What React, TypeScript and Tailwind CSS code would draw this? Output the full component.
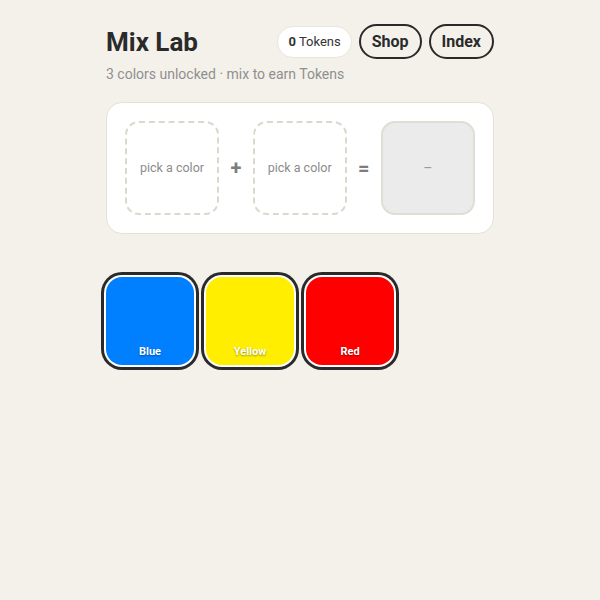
import React from "react"

const colors = [
  { name: "Blue", hex: "#0080ff" },
  { name: "Yellow", hex: "#ffee00" },
  { name: "Red", hex: "#ff0000" },
]

function Slot() {
  return (
    <div className="w-[94px] h-[94px] rounded-[14px] border-2 border-dashed border-[#ddd8cc] flex items-center justify-center text-[12.5px] text-[#8c8c8c]">
      pick a color
    </div>
  )
}

export default function App() {
  return (
    <div
      className="min-h-screen bg-[#f4f1eb] text-[#2a2a2a]"
      style={{ fontFamily: "Roboto, 'Liberation Sans', sans-serif" }}
    >
      <div className="max-w-[388px] mx-auto pt-[24px]">
        {/* Header */}
        <div className="flex items-center justify-between">
          <h1 className="text-[26px] font-bold leading-none">Mix Lab</h1>
          <div className="flex items-center gap-[7px]">
            <div className="h-[32px] px-[10px] rounded-full bg-white border border-[#ebe6dc] flex items-center text-[13px] text-[#333]">
              <span className="font-bold mr-[3px]">0</span>Tokens
            </div>
            <button className="h-[35px] px-[11px] rounded-full border-2 border-[#2a2a2a] text-[16px] font-bold">
              Shop
            </button>
            <button className="h-[35px] px-[11px] rounded-full border-2 border-[#2a2a2a] text-[16px] font-bold">
              Index
            </button>
          </div>
        </div>
        <p className="mt-[5px] text-[14px] text-[#8f8f8f]">3 colors unlocked · mix to earn Tokens</p>

        {/* Mixer */}
        <div className="mt-[17px] bg-white border border-[#e6e1d6] rounded-[16px] p-[18px] flex items-center justify-between">
          <Slot />
          <span className="text-[20px] font-bold text-[#7d7d7d]">+</span>
          <Slot />
          <span className="text-[20px] font-bold text-[#7d7d7d]">=</span>
          <div className="w-[94px] h-[94px] rounded-[14px] bg-[#ebebeb] border-2 border-[#e0ddd5] flex items-center justify-center text-[14px] text-[#9a9a9a]">
            –
          </div>
        </div>

        {/* Palette */}
        <div className="mt-[43px] grid grid-cols-4 gap-3">
          {colors.map((c) => (
            <button
              key={c.name}
              className="aspect-square rounded-[16px] flex items-end justify-center pb-[5px] shadow-[0_0_0_2px_#ffffff,0_0_0_5px_#2a2a2a]"
              style={{ backgroundColor: c.hex }}
            >
              <span className="text-[11px] font-bold text-white [text-shadow:0_1px_2px_rgba(0,0,0,0.4)]">
                {c.name}
              </span>
            </button>
          ))}
        </div>
      </div>
    </div>
  )
}
